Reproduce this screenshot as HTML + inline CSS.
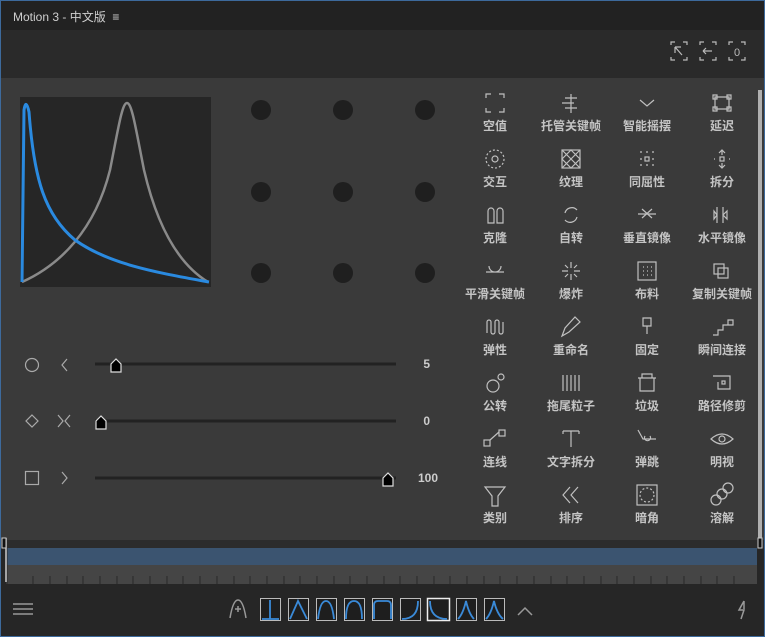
<!DOCTYPE html>
<html><head><meta charset="utf-8"><style>
*{margin:0;padding:0;box-sizing:border-box}
body{width:765px;height:637px;overflow:hidden;background:#262626;font-family:"Liberation Sans","Noto Sans CJK SC",sans-serif;position:relative}
.abs{position:absolute}
.lbl{position:absolute;width:76px;text-align:center;font-size:12px;font-weight:bold;color:#c4c4c4;line-height:14px}
</style></head><body>
<div class="abs" style="left:0;top:0;width:765px;height:637px;border:1px solid #3d6a9c;z-index:5;pointer-events:none"></div>
<div class="abs" style="left:0;top:0;width:765px;height:30px;background:#222"></div>
<div class="abs" style="left:13px;top:8px;font-size:12px;color:#cfcfcf">Motion 3 - 中文版 &nbsp;≡</div>
<div class="abs" style="left:0;top:30px;width:765px;height:48px;background:#2a2a2a"></div>
<div class="abs" style="left:0;top:78px;width:765px;height:462px;background:#3a3a3a"></div>
<div class="abs" style="left:758px;top:90px;width:4px;height:450px;background:#b0b0b0"></div>
<!-- timeline -->
<div class="abs" style="left:0;top:540px;width:765px;height:8px;background:#2c2c2c"></div>
<div class="abs" style="left:6px;top:548px;width:751px;height:17px;background:#3b5470"></div>
<div class="abs" style="left:6px;top:565px;width:751px;height:19px;background:#454545"></div>
<svg class="abs" style="left:0;top:0" width="765" height="637">
<g stroke="#bbb" fill="none" stroke-width="1.2">
<path d="M671 45v-3h4M683 42h4v3M671 57v3h4M683 60h4v-3M675 47l7 8M675 47v6M675 47h6"/>
<path d="M700 45v-3h4M712 42h4v3M700 57v3h4M712 60h4v-3M703 51h9M703 51l3-3M703 51l3 3"/>
<path d="M729 45v-3h4M741 42h4v3M729 57v3h4M741 60h4v-3"/>
</g>
<text x="737" y="56" fill="#bbb" font-size="11" text-anchor="middle" font-family="Liberation Sans">0</text>
<rect x="20" y="97" width="191" height="190" fill="#262626"/>
<path d="M22 282 C60 265 95 230 110 170 C118 130 122 103 127 103 C132 103 136 130 144 170 C158 230 180 265 208 282" stroke="#8a8a8a" stroke-width="2.5" fill="none"/>
<path d="M22 282 L24 110 Q26 98 29 112 C34 180 45 215 75 240 C110 265 160 273 209 282" stroke="#2a8ae0" stroke-width="3" fill="none"/>
<g fill="#1f1f1f">
<circle cx="261" cy="110" r="10"/><circle cx="343" cy="110" r="10"/><circle cx="425" cy="110" r="10"/>
<circle cx="261" cy="192" r="10"/><circle cx="343" cy="192" r="10"/><circle cx="425" cy="192" r="10"/>
<circle cx="261" cy="273" r="10"/><circle cx="343" cy="273" r="10"/><circle cx="425" cy="273" r="10"/>
</g>
<g stroke="#aaa" fill="none" stroke-width="1.2">
<circle cx="32" cy="365" r="6.5"/><path d="M67 359l-5 6 5 6"/>
<path d="M32 415l6 6-6 6-6-6z"/><path d="M58 415l5 6-5 6M70 415l-5 6 5 6"/>
<rect x="25.5" y="471.5" width="13" height="13"/><path d="M62 472l5 6-5 6"/>
</g>
<g stroke="#222" stroke-width="3"><path d="M95 364h301M95 421h301M95 478h301"/></g>
<g fill="#000" stroke="#ddd" stroke-width="1.2">
<path d="M111 372v-8l5-5 5 5v8z"/><path d="M96 429v-8l5-5 5 5v8z"/><path d="M383 486v-8l5-5 5 5v8z"/>
</g>
<g fill="#ccc" font-size="12" font-weight="bold" font-family="Liberation Sans" text-anchor="end">
<text x="430" y="368">5</text><text x="430" y="425">0</text><text x="438" y="482">100</text></g>
<!-- grid icons -->
<g stroke="#c0c0c0" fill="none" stroke-width="1.2">
<path d="M486 98v-4h5M499 94h5v4M486 108v4h5M499 112h5v-4"/>
<path d="M571 94v19M565 98h12M562 103h12M565 108h12"/>
<path d="M640 100l7 6 7-6"/>
<path d="M715 97h14v12h-14zM713 95h4v4h-4zM727 95h4v4h-4zM713 107h4v4h-4zM727 107h4v4h-4z"/>
<circle cx="495" cy="159" r="9" stroke-dasharray="2 2"/><circle cx="495" cy="159" r="3"/>
<rect x="562" y="150" width="18" height="18"/><path d="M562 150l18 18M580 150l-18 18M571 150l9 9-9 9-9-9z"/>
<path d="M640 152h2M646 152h2M652 152h2M640 159h2M652 159h2M640 165h2M646 165h2M652 165h2"/><rect x="645" y="157" width="4" height="4"/>
<path d="M722 150v5M719 153l3-3 3 3M722 163v5M719 165l3 3 3-3M714 159h1M729 159h1"/><rect x="720" y="157" width="4" height="4"/>
<path d="M488 223v-12a3 3 0 0 1 6 0v12zM497 223v-12a3 3 0 0 1 6 0v12z"/>
<path d="M565 213a7 7 0 0 1 12-3M577 217a7 7 0 0 1-12 3"/>
<path d="M638 214h18M642 209l10 9M652 209l-10 9"/>
<path d="M717 207v16M723 207v16M717 215l-3-4v8zM723 215l4-4v8z"/>
<path d="M486 272h18M489 266a6 6 0 0 0 12 0"/>
<path d="M571 262v6M571 274v6M562 271h6M574 271h6M565 265l3 3M577 265l-3 3M565 277l3-3M577 277l-3-3"/>
<rect x="638" y="262" width="18" height="18"/><path d="M643 267h1M647 267h1M651 267h1M643 271h1M647 271h1M651 271h1M643 275h1M647 275h1M651 275h1"/>
<rect x="714" y="264" width="10" height="10"/><rect x="718" y="268" width="10" height="10"/>
<path d="M487 333v-11a2 2 0 0 1 4 0v10a2 2 0 0 0 4 0v-10a2 2 0 0 1 4 0v10a2 2 0 0 0 4 0v-10"/>
<path d="M562 336l3-8 10-11 5 5-11 10z"/>
<path d="M643 318h8v8h-8zM647 326v8"/>
<path d="M713 335h5v-5h5v-5h5v-5h5v5h-5"/>
<circle cx="493" cy="386" r="6"/><circle cx="501" cy="377" r="3"/>
<path d="M563 375v16M567 375v16M571 375v16M575 375v16M579 375v16"/>
<path d="M638 378h18M640 378v13h14v-13M642 378v-4h10v4"/>
<path d="M713 376h17v13h-12v-7"/><rect x="722" y="381" width="3" height="3"/>
<rect x="484" y="440" width="6" height="6"/><rect x="499" y="430" width="6" height="6"/><path d="M490 440l9-8"/>
<path d="M563 431h16M563 431v3M579 431v3M571 431v16"/>
<path d="M638 430l5 9h13M645 436a3 3 0 1 0 5 0"/>
<path d="M711 439q11-10 22 0q-11 10-22 0z"/><circle cx="722" cy="439" r="3"/>
<path d="M485 487h20l-7 9v10h-6v-10z"/>
<path d="M570 487l-7 8 7 8M578 487l-7 8 7 8"/>
<rect x="637" y="485" width="20" height="20"/><circle cx="647" cy="495" r="7" stroke-dasharray="2 2"/>
<circle cx="716" cy="500" r="5"/><circle cx="722" cy="494" r="5"/><circle cx="728" cy="488" r="5"/>
</g>
<!-- ticks -->
<g stroke="#2a2a2a" stroke-width="1"><path d="M7 548v36"/></g>
<g stroke="#777" stroke-width="1" id="t"></g>
<path d="M6 538v44" stroke="#ccc" stroke-width="1.5"/>
<rect x="2" y="538" width="4" height="10" fill="#111" stroke="#ccc"/>
<rect x="758" y="538" width="4" height="10" fill="#111" stroke="#ccc"/>
<g stroke="#2e2e2e" stroke-width="1.2">
<path d="M33 576v8M50 576v8M67 576v8M83 576v8M100 576v8M117 576v8M133 576v8M150 576v8M167 576v8M183 576v8M200 576v8M217 576v8M234 576v8M250 576v8M267 576v8M284 576v8M300 576v8M317 576v8M334 576v8M350 576v8M367 576v8M384 576v8M400 576v8M417 576v8M434 576v8M450 576v8M467 576v8M484 576v8M500 576v8M517 576v8M534 576v8M551 576v8M567 576v8M584 576v8M601 576v8M617 576v8M634 576v8M651 576v8M667 576v8M684 576v8M701 576v8M717 576v8M734 576v8"/></g>
<!-- bottom -->
<g stroke="#999" stroke-width="1.5" fill="none"><path d="M13 604h20M13 609h20M13 614h20"/>
<path d="M230 618q3-18 8-18q5 0 8 18M235 609h6M238 606v6"/>
<path d="M518 615l7-7 7 7"/>
<path d="M744 601l-5 9h5l-3 9M744 601v8"/></g>
<g fill="#1e1e1e" stroke="#bbb" stroke-width="1">
<rect x="260.5" y="598.5" width="20" height="22"/><rect x="288.5" y="598.5" width="20" height="22"/><rect x="316.5" y="598.5" width="20" height="22"/><rect x="344.5" y="598.5" width="20" height="22"/><rect x="372.5" y="598.5" width="20" height="22"/><rect x="400.5" y="598.5" width="20" height="22"/><rect x="427.5" y="598.5" width="22" height="22" stroke="#eee" stroke-width="1.5"/><rect x="456.5" y="598.5" width="20" height="22"/><rect x="484.5" y="598.5" width="20" height="22"/>
</g>
<g stroke="#3a8ad8" stroke-width="1.8" fill="none">
<path d="M270 600v19M262 619h17"/><path d="M290 619l8-18 9 18"/><path d="M318 619q2-18 8-18q6 0 8 18"/><path d="M346 619q0-18 8-18q8 0 8 18"/><path d="M374 619v-14q0-4 4-4h9q4 0 4 4v14"/><path d="M402 619q16 0 16-18"/><path d="M430 601q0 18 17 18"/><path d="M458 619q5-5 8-18q3 13 8 18"/><path d="M486 619q5-5 8-18q3 13 9 18"/>
</g>
</svg>
<div class="lbl" style="left:457px;top:119px">空值</div><div class="lbl" style="left:533px;top:119px">托管关键帧</div><div class="lbl" style="left:609px;top:119px">智能摇摆</div><div class="lbl" style="left:684px;top:119px">延迟</div>
<div class="lbl" style="left:457px;top:175px">交互</div><div class="lbl" style="left:533px;top:175px">纹理</div><div class="lbl" style="left:609px;top:175px">同屈性</div><div class="lbl" style="left:684px;top:175px">拆分</div>
<div class="lbl" style="left:457px;top:231px">克隆</div><div class="lbl" style="left:533px;top:231px">自转</div><div class="lbl" style="left:609px;top:231px">垂直镜像</div><div class="lbl" style="left:684px;top:231px">水平镜像</div>
<div class="lbl" style="left:457px;top:287px">平滑关键帧</div><div class="lbl" style="left:533px;top:287px">爆炸</div><div class="lbl" style="left:609px;top:287px">布料</div><div class="lbl" style="left:684px;top:287px">复制关键帧</div>
<div class="lbl" style="left:457px;top:343px">弹性</div><div class="lbl" style="left:533px;top:343px">重命名</div><div class="lbl" style="left:609px;top:343px">固定</div><div class="lbl" style="left:684px;top:343px">瞬间连接</div>
<div class="lbl" style="left:457px;top:399px">公转</div><div class="lbl" style="left:533px;top:399px">拖尾粒子</div><div class="lbl" style="left:609px;top:399px">垃圾</div><div class="lbl" style="left:684px;top:399px">路径修剪</div>
<div class="lbl" style="left:457px;top:455px">连线</div><div class="lbl" style="left:533px;top:455px">文字拆分</div><div class="lbl" style="left:609px;top:455px">弹跳</div><div class="lbl" style="left:684px;top:455px">明视</div>
<div class="lbl" style="left:457px;top:511px">类别</div><div class="lbl" style="left:533px;top:511px">排序</div><div class="lbl" style="left:609px;top:511px">暗角</div><div class="lbl" style="left:684px;top:511px">溶解</div>
</body></html>
